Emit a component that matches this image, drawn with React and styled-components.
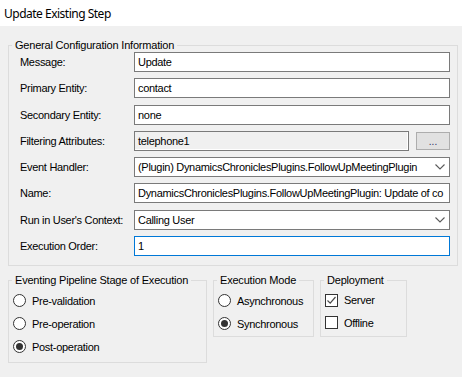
import React from "react";
import styled, { createGlobalStyle } from "styled-components";

const GlobalStyle = createGlobalStyle`
  body {
    margin: 0;
    background: #f0f0f0;
    font-family: "Liberation Sans", Arial, sans-serif;
    font-size: 11px;
    color: #000;
  }
`;

const FIELDS = [
  { label: "Message:", value: "Update" },
  { label: "Primary Entity:", value: "contact" },
  { label: "Secondary Entity:", value: "none" },
  { label: "Filtering Attributes:", value: "telephone1", kind: "picker" },
  {
    label: "Event Handler:",
    value: "(Plugin) DynamicsChroniclesPlugins.FollowUpMeetingPlugin",
    kind: "select",
  },
  {
    label: "Name:",
    value: "DynamicsChroniclesPlugins.FollowUpMeetingPlugin: Update of co",
  },
  { label: "Run in User's Context:", value: "Calling User", kind: "select" },
  { label: "Execution Order:", value: "1", kind: "focused" },
];

const Chevron = () => (
  <svg width="10" height="6" viewBox="0 0 10 6">
    <polyline points="0.5,0.5 5,5 9.5,0.5" fill="none" stroke="#5a5a5a" strokeWidth="1.1" />
  </svg>
);

const CheckMark = () => (
  <svg width="11" height="11" viewBox="0 0 11 11">
    <polyline points="1.5,5.5 4.2,8.2 9.5,2" fill="none" stroke="#4a4a4a" strokeWidth="1.2" />
  </svg>
);

const Field = ({ kind, value }) => {
  if (kind === "picker") {
    return (
      <StyledPickerRow>
        <StyledTextBox $readOnly>{value}</StyledTextBox>
        <StyledEllipsisButton>...</StyledEllipsisButton>
      </StyledPickerRow>
    );
  }
  if (kind === "select") {
    return (
      <StyledTextBox>
        <StyledValue>{value}</StyledValue>
        <Chevron />
      </StyledTextBox>
    );
  }
  return (
    <StyledTextBox $focused={kind === "focused"}>
      <StyledValue>{value}</StyledValue>
    </StyledTextBox>
  );
};

const Radio = ({ label, checked }) => (
  <StyledOption>
    <StyledRadioCircle>{checked && <StyledRadioDot />}</StyledRadioCircle>
    {label}
  </StyledOption>
);

const Check = ({ label, checked }) => (
  <StyledOption $tight>
    <StyledCheckBox>{checked && <CheckMark />}</StyledCheckBox>
    {label}
  </StyledOption>
);

export const App = () => {
  return (
    <>
      <GlobalStyle />
      <StyledTitleBar>Update Existing Step</StyledTitleBar>
      <StyledBody>
        <StyledGroup>
          <StyledLegend>General Configuration Information</StyledLegend>
          <StyledFieldGrid>
            {FIELDS.map((field) => (
              <React.Fragment key={field.label}>
                <StyledLabel>{field.label}</StyledLabel>
                <Field kind={field.kind} value={field.value} />
              </React.Fragment>
            ))}
          </StyledFieldGrid>
        </StyledGroup>
        <StyledBottomRow>
          <StyledGroup $width={199} $padBottom={4}>
            <StyledLegend>Eventing Pipeline Stage of Execution</StyledLegend>
            <StyledOptionList>
              <Radio label="Pre-validation" />
              <Radio label="Pre-operation" />
              <Radio label="Post-operation" checked />
            </StyledOptionList>
          </StyledGroup>
          <StyledGroup $width={101} $padBottom={1}>
            <StyledLegend>Execution Mode</StyledLegend>
            <StyledOptionList>
              <Radio label="Asynchronous" />
              <Radio label="Synchronous" checked />
            </StyledOptionList>
          </StyledGroup>
          <StyledGroup $width={87} $padBottom={2}>
            <StyledLegend>Deployment</StyledLegend>
            <StyledOptionList>
              <Check label="Server" checked />
              <Check label="Offline" />
            </StyledOptionList>
          </StyledGroup>
        </StyledBottomRow>
      </StyledBody>
    </>
  );
};
export default App;

const StyledTitleBar = styled.div`
  height: 26px;
  display: flex;
  align-items: center;
  padding-left: 4px;
  background: #fff;
  font-family: "Noto Sans", "Open Sans", sans-serif;
  font-size: 12px;
  letter-spacing: -0.5px;
`;

const StyledBody = styled.div`
  display: flex;
  flex-direction: column;
  gap: 7px;
  padding: 12px 0 0 8px;
`;

const StyledGroup = styled.fieldset`
  box-sizing: border-box;
  width: ${({ $width }) => ($width ? `${$width}px` : "450px")};
  margin: 0;
  padding: 0 7px ${({ $padBottom }) => ($padBottom ?? 9)}px 0;
  border: 1px solid #dcdcdc;
  min-width: 0;
`;

const StyledLegend = styled.legend`
  margin-left: 3px;
  padding: 0 3px;
  line-height: 14px;
  letter-spacing: -0.2px;
  white-space: nowrap;
`;

const StyledFieldGrid = styled.div`
  display: grid;
  grid-template-columns: 114px 316px;
  row-gap: 6.3px;
  padding-left: 11px;
`;

const StyledLabel = styled.div`
  height: 20px;
  display: flex;
  align-items: center;
  letter-spacing: -0.3px;
  white-space: nowrap;
`;

const StyledTextBox = styled.div`
  box-sizing: border-box;
  height: 20px;
  flex: 1;
  min-width: 0;
  display: flex;
  align-items: center;
  gap: 4px;
  padding: 0 4px 0 3px;
  background: ${({ $readOnly }) => ($readOnly ? "#f0f0f0" : "#fff")};
  border: 1px solid ${({ $focused }) => ($focused ? "#0078d7" : "#7a7a7a")};
  box-shadow: ${({ $readOnly }) => ($readOnly ? "inset -1px -1px 0 #fff" : "none")};
  letter-spacing: -0.3px;
  white-space: nowrap;
  overflow: hidden;
`;

const StyledValue = styled.span`
  flex: 1;
  min-width: 0;
  overflow: hidden;
`;

const StyledPickerRow = styled.div`
  display: flex;
  align-items: center;
  gap: 7px;
  height: 20px;
`;

const StyledEllipsisButton = styled.div`
  box-sizing: border-box;
  width: 34px;
  height: 18px;
  display: flex;
  align-items: flex-end;
  justify-content: center;
  padding-bottom: 2px;
  background: #e1e1e1;
  border: 1px solid #adadad;
  font-size: 10px;
  color: #303060;
`;

const StyledBottomRow = styled.div`
  display: flex;
  align-items: flex-start;
  gap: 6px;
`;

const StyledOptionList = styled.div`
  display: flex;
  flex-direction: column;
  padding: 2px 0 0 4px;
`;

const StyledOption = styled.div`
  height: ${({ $tight }) => ($tight ? "22.5px" : "23px")};
  display: flex;
  align-items: center;
  gap: 6px;
  letter-spacing: -0.3px;
  white-space: nowrap;
`;

const StyledRadioCircle = styled.div`
  box-sizing: border-box;
  width: 13px;
  height: 13px;
  display: flex;
  align-items: center;
  justify-content: center;
  border: 1px solid #333;
  border-radius: 50%;
  background: #fff;
  flex-shrink: 0;
`;

const StyledRadioDot = styled.div`
  width: 7px;
  height: 7px;
  border-radius: 50%;
  background: #333;
`;

const StyledCheckBox = styled.div`
  box-sizing: border-box;
  width: 13px;
  height: 13px;
  display: flex;
  align-items: center;
  justify-content: center;
  border: 1px solid #333;
  background: #fff;
  flex-shrink: 0;
`;
